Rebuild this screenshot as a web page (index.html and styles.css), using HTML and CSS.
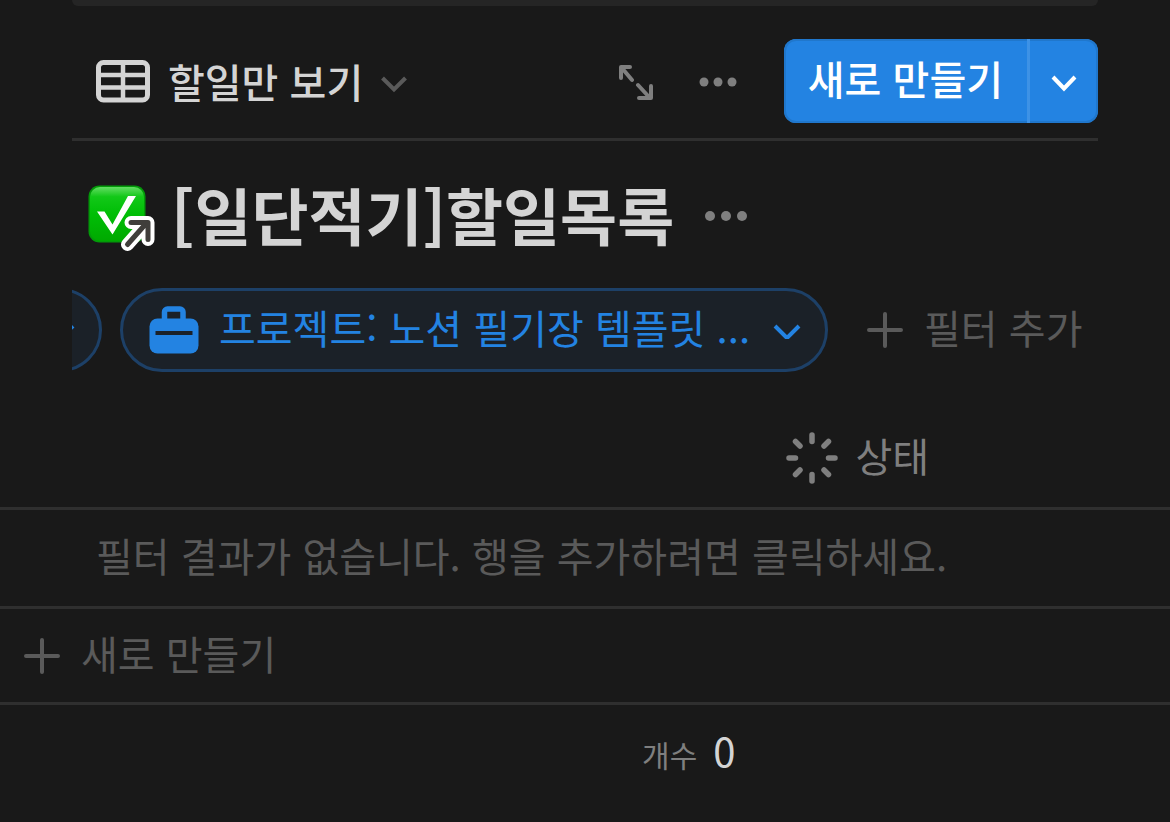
FILE: index.html
```html
<!DOCTYPE html>
<html lang="ko">
<head>
    <meta charset="UTF-8">
    <meta name="viewport" content="width=device-width, initial-scale=1.0">
    <title>할일목록</title>
    <link rel="stylesheet" href="styles.css">
</head>
<body>
    <div class="view">
        <div class="prev-block"></div>

        <div class="toolbar">
            <button class="view-tab" type="button">
                <svg width="54" height="44" viewBox="0 0 54 44" fill="none" stroke="currentColor" stroke-width="5">
                    <rect x="2.5" y="3.5" width="49" height="37.5" rx="5"/>
                    <path d="M27 3.500V41M2.500 16h49M2.500 28.500h49" stroke-width="4.500"/>
                </svg>
                <span>할일만 보기</span>
                <svg class="chevron" width="26" height="18" viewBox="0 0 26 18" fill="none" stroke="currentColor" stroke-width="4"><path d="M1.500 3L13 14.500 24.500 3"/></svg>
            </button>
            <div class="actions">
                <button class="icon-btn" type="button" aria-label="전체 페이지로 열기">
                    <svg width="36" height="36" viewBox="0 0 36 36" fill="none" stroke="currentColor" stroke-width="4" stroke-linecap="round" stroke-linejoin="round">
                        <path d="M14 16L3.500 3.500M12 3H3v11M20 21l11.500 12.500M21 34h12V22"/>
                    </svg>
                </button>
                <button class="icon-btn" type="button" aria-label="보기 설정">
                    <svg width="40" height="10" viewBox="0 0 40 10" fill="currentColor"><circle cx="5" cy="5" r="4.500"/><circle cx="19" cy="5" r="4.500"/><circle cx="33" cy="5" r="4.500"/></svg>
                </button>
                <div class="new-group">
                    <button class="new-btn" type="button">새로 만들기</button>
                    <button class="new-more" type="button" aria-label="템플릿 선택">
                        <svg width="26" height="18" viewBox="0 0 26 18" fill="none" stroke="currentColor" stroke-width="4"><path d="M2 3l11 11.500L24 3"/></svg>
                    </button>
                </div>
            </div>
        </div>

        <div class="title-row">
            <svg width="68" height="68" viewBox="0 0 68 68">
                <defs>
                    <linearGradient id="green" x1="0" y1="0" x2="0" y2="1">
                        <stop offset="0" stop-color="#63dd63"/>
                        <stop offset="0.180" stop-color="#12c818"/>
                        <stop offset="0.500" stop-color="#00be06"/>
                        <stop offset="1" stop-color="#00a900"/>
                    </linearGradient>
                </defs>
                <rect x="0.500" y="0.500" width="57" height="57" rx="11" fill="#029b08"/>
                <rect x="2" y="2" width="54" height="54" rx="10" fill="url(#green)"/>
                <path d="M9 26.500h7.500l8 13L40 11h8L24.500 49.500z" fill="#fff"/>
                <g fill="none" stroke-linecap="round" stroke-linejoin="round">
                    <path d="M39.500 59.500L58.500 38M43 37.500h17v17" stroke="#fff" stroke-width="13"/>
                    <path d="M39.500 59.500L58.500 38M43 37.500h17v17" stroke="#403e3b" stroke-width="5"/>
                </g>
            </svg>
            <h1>[일단적기]할일목록</h1>
            <button class="icon-btn" type="button" aria-label="더 보기">
                <svg width="44" height="12" viewBox="0 0 44 12" fill="currentColor"><circle cx="6" cy="6" r="5"/><circle cx="22" cy="6" r="5"/><circle cx="38" cy="6" r="5"/></svg>
            </button>
        </div>

        <div class="filters">
            <button class="pill pill-cut" type="button" aria-label="필터">
                <svg width="28" height="18" viewBox="0 0 28 18" fill="none" stroke="currentColor" stroke-width="4"><path d="M2 5l12 12L26 5"/></svg>
            </button>
            <button class="pill" type="button">
                <svg width="50" height="48" viewBox="0 0 50 48">
                    <path d="M15.500 15V6A3 3 0 0 1 18.500 3h12.500A3 3 0 0 1 34 6v9" fill="none" stroke="currentColor" stroke-width="5.500"/>
                    <rect x="0.500" y="12.500" width="49" height="35" rx="8" fill="currentColor"/>
                    <path d="M6.500 27h37" stroke="#1b2128" stroke-width="4"/>
                </svg>
                <span class="pill-label label">프로젝트: 노션 필기장 템플릿 ...</span>
                <svg width="28" height="18" viewBox="0 0 28 18" fill="none" stroke="currentColor" stroke-width="4"><path d="M2 5l12 12L26 5"/></svg>
            </button>
            <button class="add-filter" type="button">
                <svg width="36" height="36" viewBox="0 0 36 36" stroke="currentColor" stroke-width="4" stroke-linecap="round"><path d="M18 2v32M2 18h32"/></svg>
                <span class="label">필터 추가</span>
            </button>
        </div>
    </div>

    <table class="tasks">
        <colgroup>
            <col class="col-name">
            <col>
        </colgroup>
        <thead>
            <tr>
                <td></td>
                <th scope="col">
                    <div class="col-head">
                        <svg width="52" height="52" viewBox="0 0 52 52" stroke="currentColor" stroke-width="5.500" stroke-linecap="round">
                            <path d="M26 3v6.500M26 42.500V49M3 26h6.500M42.500 26H49M9.500 9.500l4.500 4.500M38 38l4.500 4.500M9.500 42.500L14 38M38 14l4.500-4.500"/>
                        </svg>
                        <span class="label">상태</span>
                    </div>
                </th>
            </tr>
        </thead>
        <tbody>
            <tr>
                <td colspan="2"><button class="row-btn empty" type="button"><span class="label">필터 결과가 없습니다. 행을 추가하려면 클릭하세요.</span></button></td>
            </tr>
            <tr>
                <td colspan="2">
                    <button class="row-btn add" type="button">
                        <svg width="36" height="36" viewBox="0 0 36 36" stroke="currentColor" stroke-width="4" stroke-linecap="round"><path d="M18 2v32M2 18h32"/></svg>
                        <span class="label">새로 만들기</span>
                    </button>
                </td>
            </tr>
        </tbody>
        <tfoot>
            <tr>
                <td>
                    <div class="count"><span class="count-label">개수</span><span class="count-value">0</span></div>
                </td>
                <td></td>
            </tr>
        </tfoot>
    </table>
</body>
</html>
```
FILE: styles.css
```css
* { box-sizing: border-box; }
body { margin: 0; background: #191919; color: #d4d4d4; font-family: 'Noto Sans CJK KR', sans-serif; font-size: 40px; line-height: 60px; overflow-x: hidden; }
button { display: flex; align-items: center; margin: 0; padding: 0; border: 0; background: none; color: inherit; font: inherit; white-space: nowrap; cursor: pointer; }
svg { display: block; flex: none; }
.label { padding-bottom: 6px; }

.view { margin: 0 72px; }
.prev-block { height: 6px; background: #252525; border-radius: 0 0 12px 12px; }

.toolbar { display: flex; align-items: center; justify-content: space-between; padding: 33px 0 15px; border-bottom: 3px solid #2f2f2f; }
.view-tab { padding-left: 24px; gap: 18px; font-weight: 500; }
.view-tab .chevron { margin-top: 6px; color: #5a5a5a; }
.actions { display: flex; align-items: center; gap: 45px; }
.icon-btn { color: #7f7f7f; }
.actions .icon-btn { padding-top: 2px; }
.new-group { display: flex; height: 84px; border-radius: 12px; background: #2383e2; color: #fff; box-shadow: inset 0 0 0 2px #2077cc; }
.new-btn { padding: 0 24px 6px; font-weight: 500; }
.new-more { justify-content: center; width: 71px; padding-top: 3px; border-left: 3px solid #3d92e6; }

.title-row { display: flex; align-items: center; padding: 36px 16px 27px; }
.title-row h1 { margin: 0 30px 0 15px; padding-bottom: 10px; font-size: 62px; line-height: 74px; font-weight: 700; white-space: nowrap; }
.title-row .icon-btn { padding-bottom: 6px; }

.filters { display: flex; align-items: center; gap: 18px; overflow: hidden; }
.pill { flex: none; height: 84px; padding: 0 24px 0 26px; gap: 20px; border: 3px solid #1d4067; border-radius: 42px; background: #1b2128; color: #2383e2; }
.pill-label { margin-right: 3px; }
/* scrolled past the left edge */
.pill-cut { width: 90px; margin-left: -60px; justify-content: flex-end; }
.add-filter { flex: none; gap: 21px; padding-left: 21px; color: #5a5a5a; }

.tasks { width: 100%; margin-top: 36px; border-collapse: collapse; table-layout: fixed; }
.tasks td, .tasks th { padding: 0; font-weight: 400; text-align: left; }
.tasks thead tr, .tasks tbody tr { border-bottom: 3px solid #2f2f2f; }
.col-name { width: 65%; }
.col-head { display: flex; align-items: center; gap: 18px; height: 99px; padding-left: 25px; color: #7f7f7f; }
.row-btn { width: 100%; height: 96px; color: #5a5a5a; }
.empty { padding-left: 96px; }
.add { height: 93px; padding-left: 24px; gap: 21px; }
.count { display: flex; align-items: baseline; justify-content: flex-end; gap: 16px; padding: 15px 25px 36px; }
.count-label { font-size: 30px; color: #7f7f7f; }
```
